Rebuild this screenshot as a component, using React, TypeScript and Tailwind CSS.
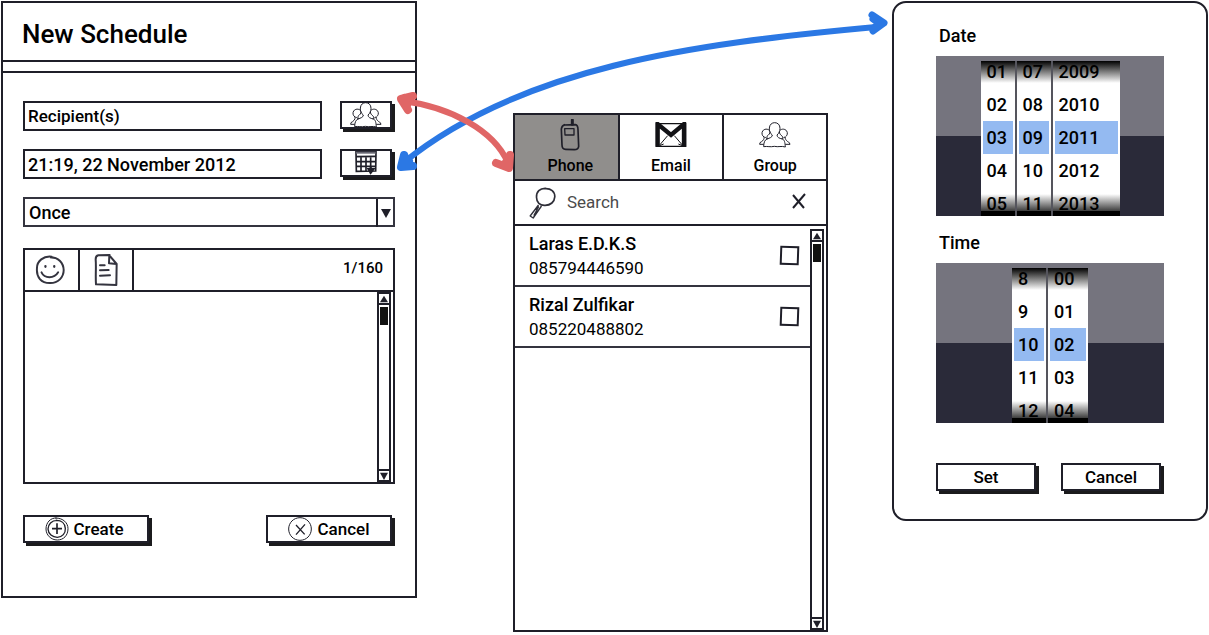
import { ReactNode } from "react";

const ink = "#1f1f29";

function PeopleIcon() {
  return (
    <svg viewBox="0 0 96 78" className="h-[26px] w-8 shrink-0" fill="none" stroke={ink} strokeWidth="3" strokeLinejoin="round" aria-hidden="true">
      <path d="M40 39C33 34 30 26 31 18C32 7 39 2 47 2C56 2 63 8 63 19C63 27 60 34 54 39C54 46 61 49 70 51C76 53 78 60 79 75C68 71 58 76 46 73C34 76 25 72 14 74C14 62 17 54 24 51C32 48 40 46 40 39Z" />
      <path d="M31 25C26 20 16 20 11 27C7 33 9 41 15 45C17 52 10 58 3 62L2 67L14 67M16 45C23 46 21 51 25 51M33 28C34 35 29 38 24 43C23 46 24 49 27 50" />
      <path d="M63 25C68 20 78 20 83 27C87 33 85 41 79 45C77 52 84 58 91 62L93 67L79 67M78 45C72 46 73 51 69 51M61 29C61 35 65 39 70 43C72 46 71 49 68 50" />
    </svg>
  );
}

function CalendarIcon() {
  return (
    <svg viewBox="0 0 66 72" className="h-6 w-[22px] shrink-0" fill="none" stroke={ink} strokeWidth="5" aria-hidden="true">
      <path d="M3 2H63L62 60L4 61Z" fill="#fff" />
      <path d="M3 5H62" strokeWidth="6" stroke="#666671" />
      <path d="M3 17L63 16M4 32H62M4 46H62M18 18V60M33 17V61M47 18V60" />
      <path d="M47 47V68M40 54L47 66L56 54Z" fill={ink} strokeWidth="6" />
    </svg>
  );
}

function SmileIcon() {
  return (
    <svg viewBox="0 0 90 92" className="h-[30px] w-[30px]" fill="none" stroke="#34343f" strokeWidth="6" strokeLinecap="round" aria-hidden="true">
      <path d="M50 5C26 2 4 18 5 42C3 68 18 86 44 86C70 87 87 68 87 46C86 24 72 7 45 7L61 9" />
      <path d="M19 53C28 73 58 73 70 53" />
      <path d="M31 34V36M58 34V36" strokeWidth="7" />
    </svg>
  );
}

function NoteIcon() {
  return (
    <svg viewBox="0 0 72 96" className="h-8 w-6" fill="none" stroke="#34343f" strokeWidth="6" strokeLinecap="round" strokeLinejoin="round" aria-hidden="true">
      <path d="M47 3L13 4C7 5 5 8 5 16C7 40 4 65 6 91L67 93L68 30L46 4L45 28L67 30" />
      <path d="M18 34H32M18 49L44 48M18 65L48 64" />
    </svg>
  );
}

function PlusIcon() {
  return (
    <svg viewBox="0 0 72 72" className="size-6 shrink-0" fill="none" stroke={ink} strokeWidth="3" aria-hidden="true">
      <path d="M35 3C16 2 3 17 3 36C3 54 18 69 37 69C56 69 69 55 69 35C69 18 55 3 31 3" />
      <path d="M36 10C20 10 9 22 9 36C10 51 22 61 37 61C52 60 62 49 61 34C60 20 50 9 32 10" strokeWidth="4" />
      <path d="M36 19V51M21 35H51" strokeWidth="5" />
    </svg>
  );
}

function CrossIcon() {
  return (
    <svg viewBox="0 0 72 72" className="size-6 shrink-0" fill="none" stroke={ink} strokeWidth="3" aria-hidden="true">
      <path d="M36 2C17 2 2 17 2 36C2 55 17 70 36 70C55 70 70 55 70 36C70 17 55 2 36 2Z" />
      <path d="M24 24L50 52M51 22L24 53" strokeWidth="4" />
    </svg>
  );
}

function PhoneIcon() {
  return (
    <svg viewBox="0 0 60 96" className="h-8 w-5" fill="none" stroke={ink} strokeWidth="5" strokeLinejoin="round" aria-hidden="true">
      <path d="M12 18L46 17C53 18 54 25 54 32L56 82C55 90 50 92 43 92L17 91C8 91 6 85 6 78L4 30C5 22 7 19 15 17" />
      <path d="M14 29H42V48H15Z" strokeWidth="4" />
      <path d="M37 3V16" strokeWidth="9" strokeLinecap="round" />
    </svg>
  );
}

function MailIcon() {
  return (
    <svg viewBox="0 0 96 76" className="h-[26px] w-8" fill="none" stroke="#111115" aria-hidden="true">
      <path d="M4 4H92V72H4Z" strokeWidth="4" fill="#fff" />
      <path d="M8 73V5L48 38L87 5V73" strokeWidth="13" />
      <path d="M14 68L38 40M82 68L58 40M14 70L26 65M82 70L70 65" strokeWidth="3" />
    </svg>
  );
}

function SearchIcon() {
  return (
    <svg viewBox="0 0 80 96" className="h-8 w-[27px] shrink-0" fill="none" stroke="#2e2e38" strokeWidth="4" strokeLinejoin="round" aria-hidden="true">
      <path d="M50 4C32 3 21 15 22 31C22 46 32 56 48 55C64 55 76 45 77 29C77 14 66 3 46 5" strokeWidth="5" />
      <path d="M28 54L3 87L12 93L37 57M20 68L28 60L14 86" />
    </svg>
  );
}

function Triangle({ up = false, big = false }: { up?: boolean; big?: boolean }) {
  return (
    <svg viewBox="0 0 10 10" className={big ? "h-3 w-[10px]" : "size-2"} fill={ink} aria-hidden="true">
      <path d={up ? "M5 1L10 9H0Z" : "M0 1H10L5 10Z"} />
    </svg>
  );
}

function ScrollBar() {
  return (
    <div className="mr-[2px] flex w-[14px] shrink-0 flex-col border-2 border-[#1f1f29]">
      <button type="button" aria-label="Scroll up" className="flex h-[9px] items-center justify-center">
        <Triangle up />
      </button>
      <div className="flex flex-1 flex-col border-y-2 border-[#1f1f29] px-px pt-[2px]">
        <div className="h-[18px] bg-[#111]" />
      </div>
      <button type="button" aria-label="Scroll down" className="flex h-[9px] items-center justify-center">
        <Triangle />
      </button>
    </div>
  );
}

function SketchButton({ children, label, className = "" }: { children: ReactNode; label?: string; className?: string }) {
  return (
    <button
      type="button"
      aria-label={label}
      className={`mr-[3px] flex h-7 items-center justify-center gap-[5px] border-2 border-[#1f1f29] bg-white font-medium shadow-[3px_3px_0_#1b1b1d] ${className}`}
    >
      {children}
    </button>
  );
}

function SchedulePanel() {
  return (
    <section className="ml-px min-w-0 border-2 border-[#1f1f29] bg-white">
      <header className="flex h-[59px] items-center border-b-2 border-[#1f1f29] px-[19px] pt-[6px]">
        <h1 className="text-[26px] font-medium">New Schedule</h1>
      </header>
      <div className="h-[11px] border-b-2 border-[#1f1f29]" />
      <form className="flex flex-col px-5 pb-[53px] pt-7">
        <div className="flex gap-[18px]">
          <input aria-label="Recipients" defaultValue="Recipient(s)" className="h-[30px] min-w-0 flex-1 border-2 border-[#1f1f29] px-[3px] font-medium outline-none" />
          <SketchButton label="Choose recipients" className="w-[52px]">
            <PeopleIcon />
          </SketchButton>
        </div>
        <div className="mt-[18px] flex gap-[18px]">
          <input aria-label="Date and time" defaultValue="21:19, 22 November 2012" className="h-[30px] min-w-0 flex-1 border-2 border-[#1f1f29] px-[3px] text-lg font-medium outline-none" />
          <SketchButton label="Choose date and time" className="w-[52px]">
            <CalendarIcon />
          </SketchButton>
        </div>
        <div className="mt-[18px] grid h-[30px] border-2 border-[#34343f]">
          <select aria-label="Repeat" className="col-start-1 row-start-1 appearance-none px-1 text-lg font-medium outline-none">
            <option>Once</option>
          </select>
          <span className="pointer-events-none col-start-1 row-start-1 flex w-[17px] items-center justify-center justify-self-end border-l-2 border-[#1f1f29]">
            <Triangle big />
          </span>
        </div>
        <div className="mt-[21px] border-2 border-[#1f1f29]">
          <div className="flex h-[42px] items-stretch border-b-2 border-[#1f1f29]">
            <button type="button" aria-label="Insert smiley" className="flex w-[55px] items-center justify-center border-r-2 border-[#1f1f29] pr-1">
              <SmileIcon />
            </button>
            <button type="button" aria-label="Insert template" className="flex w-[54px] items-center justify-center border-r-2 border-[#1f1f29]">
              <NoteIcon />
            </button>
            <span className="ml-auto self-center pb-1 pr-[10px] text-[15px] font-medium">1/160</span>
          </div>
          <div className="flex h-[190px]">
            <textarea aria-label="Message" className="min-w-0 flex-1 resize-none p-1 outline-none" />
            <ScrollBar />
          </div>
        </div>
        <div className="mt-[31px] flex justify-between">
          <SketchButton className="w-[126px] pr-1">
            <PlusIcon />
            <span className="pt-[2px]">Create</span>
          </SketchButton>
          <SketchButton className="w-[126px]">
            <CrossIcon />
            <span className="pt-[2px]">Cancel</span>
          </SketchButton>
        </div>
      </form>
    </section>
  );
}

const tabs = [
  { name: "Phone", icon: <PhoneIcon />, active: true },
  { name: "Email", icon: <MailIcon />, active: false },
  { name: "Group", icon: <PeopleIcon />, active: false },
];

const contacts = [
  { name: "Laras E.D.K.S", phone: "085794446590" },
  { name: "Rizal Zulfikar", phone: "085220488802" },
];

function ContactsPanel() {
  return (
    <section className="mt-28 flex min-h-[519px] min-w-0 flex-col border-2 border-[#1f1f29] bg-white">
      <div role="tablist" className="grid h-[66px] shrink-0 grid-cols-[106fr_106fr_103fr] divide-x-2 divide-[#1f1f29] border-b-2 border-[#1f1f29]">
        {tabs.map((tab) => (
          <button
            key={tab.name}
            type="button"
            role="tab"
            aria-selected={tab.active}
            className={`flex flex-col items-center justify-between pb-px pt-1 text-base font-medium leading-6 ${tab.active ? "bg-[#908e8c] pl-2" : "bg-white"}`}
          >
            <span className="flex h-8 items-center">{tab.icon}</span>
            {tab.name}
          </button>
        ))}
      </div>
      <div className="flex h-[45px] shrink-0 items-center gap-[11px] border-b-2 border-[#1f1f29] pl-[14px] pr-5">
        <SearchIcon />
        <input type="text" aria-label="Search contacts" placeholder="Search" className="min-w-0 flex-1 outline-none placeholder:text-[#4b4b4b]" />
        <button type="button" aria-label="Clear search">
          <svg viewBox="0 0 14 16" className="mb-1 h-4 w-[14px]" fill="none" stroke={ink} strokeWidth="2" aria-hidden="true">
            <path d="M1 2L12 15M13 1L1 15" />
          </svg>
        </button>
      </div>
      <div className="flex flex-1">
        <ul className="min-w-0 flex-1">
          {contacts.map((contact) => (
            <li key={contact.name} className="border-b-2 border-[#34343f]">
              <label className="flex h-[59px] items-center justify-between pl-[14px] pr-[11px]">
                <span className="flex flex-col">
                  <span className="text-lg font-medium leading-6">{contact.name}</span>
                  <span className="leading-6">{contact.phone}</span>
                </span>
                <input type="checkbox" className="size-[19px] rotate-2 appearance-none border-2 border-[#1f1f29] checked:bg-[#1f1f29]" />
              </label>
            </li>
          ))}
        </ul>
        <div className="flex pt-[3px]">
          <ScrollBar />
        </div>
      </div>
    </section>
  );
}

type Column = { name: string; width: string; values: string[] };

const dateColumns: Column[] = [
  { name: "Day", width: "w-9", values: ["01", "02", "03", "04", "05"] },
  { name: "Month", width: "w-9", values: ["07", "08", "09", "10", "11"] },
  { name: "Year", width: "w-[67px]", values: ["2009", "2010", "2011", "2012", "2013"] },
];

const timeColumns: Column[] = [
  { name: "Hour", width: "w-9", values: ["8", "9", "10", "11", "12"] },
  { name: "Minute", width: "w-10", values: ["00", "01", "02", "03", "04"] },
];

function WheelPicker({ title, columns }: { title: string; columns: Column[] }) {
  return (
    <div className="flex flex-col">
      <h2 className="px-[3px] text-lg font-medium leading-6">{title}</h2>
      <div className="mt-2 flex h-40 items-end justify-center bg-[linear-gradient(#75747e_50%,#2a2a39_50%)]">
        <div className="flex h-[155px] divide-x-2 divide-[#55555d] overflow-hidden bg-[linear-gradient(#000_0,#fff_22px,#fff_133px,#3c3c3c_150px,#000_150px)]">
          {columns.map((column) => (
            <ul key={column.name} role="listbox" aria-label={column.name} className={`flex shrink-0 flex-col justify-center px-[2px] pb-[2px] ${column.width}`}>
              {column.values.map((value, index) => (
                <li
                  key={value}
                  role="option"
                  aria-selected={index === 2}
                  className={`flex h-[33px] shrink-0 items-center pl-1 text-lg font-medium ${index === 2 ? "bg-[#94baf1]" : ""}`}
                >
                  {value}
                </li>
              ))}
            </ul>
          ))}
        </div>
      </div>
    </div>
  );
}

function DateTimePanel() {
  return (
    <section className="flex min-h-[520px] min-w-0 flex-col rounded-[14px] border-2 border-[#1f1f29] bg-white px-[42px] pt-[21px]">
      <WheelPicker title="Date" columns={dateColumns} />
      <div className="mt-[15px]">
        <WheelPicker title="Time" columns={timeColumns} />
      </div>
      <div className="mt-10 flex justify-between">
        <SketchButton className="w-[100px]">
          <span className="pt-[2px]">Set</span>
        </SketchButton>
        <SketchButton className="w-[100px]">
          <span className="pt-[2px]">Cancel</span>
        </SketchButton>
      </div>
    </section>
  );
}

function Connectors() {
  return (
    <svg
      viewBox="0 0 1209 190"
      preserveAspectRatio="none"
      className="pointer-events-none absolute left-0 top-0 h-[190px] w-full"
      fill="none"
      strokeLinecap="round"
      strokeLinejoin="round"
      aria-hidden="true"
    >
      <g stroke="#2b78e4">
        <path d="M403 163C520 68 690 44 876 27" strokeWidth="6" />
        <path d="M404 155L401 167L413 166M406 158L404 166L409 161" strokeWidth="8" />
        <path d="M872 15L884 23L873 31M873 19L880 24L875 27" strokeWidth="7" />
      </g>
      <g stroke="#e06666">
        <path d="M403 101C450 107 494 130 508 163" strokeWidth="6" />
        <path d="M413 96L401 99L408 110M404 98L407 105" strokeWidth="8" />
        <path d="M510 155L509 168L496 163M506 162L509 165" strokeWidth="8" />
      </g>
    </svg>
  );
}

export default function App() {
  return (
    <main className="relative grid min-h-[635px] grid-cols-[417fr_96fr_315fr_64fr_316fr] items-start overflow-hidden bg-white pr-px pt-px font-[Roboto,sans-serif] text-[17px] text-black">
      <SchedulePanel />
      <span />
      <ContactsPanel />
      <span />
      <DateTimePanel />
      <Connectors />
    </main>
  );
}
